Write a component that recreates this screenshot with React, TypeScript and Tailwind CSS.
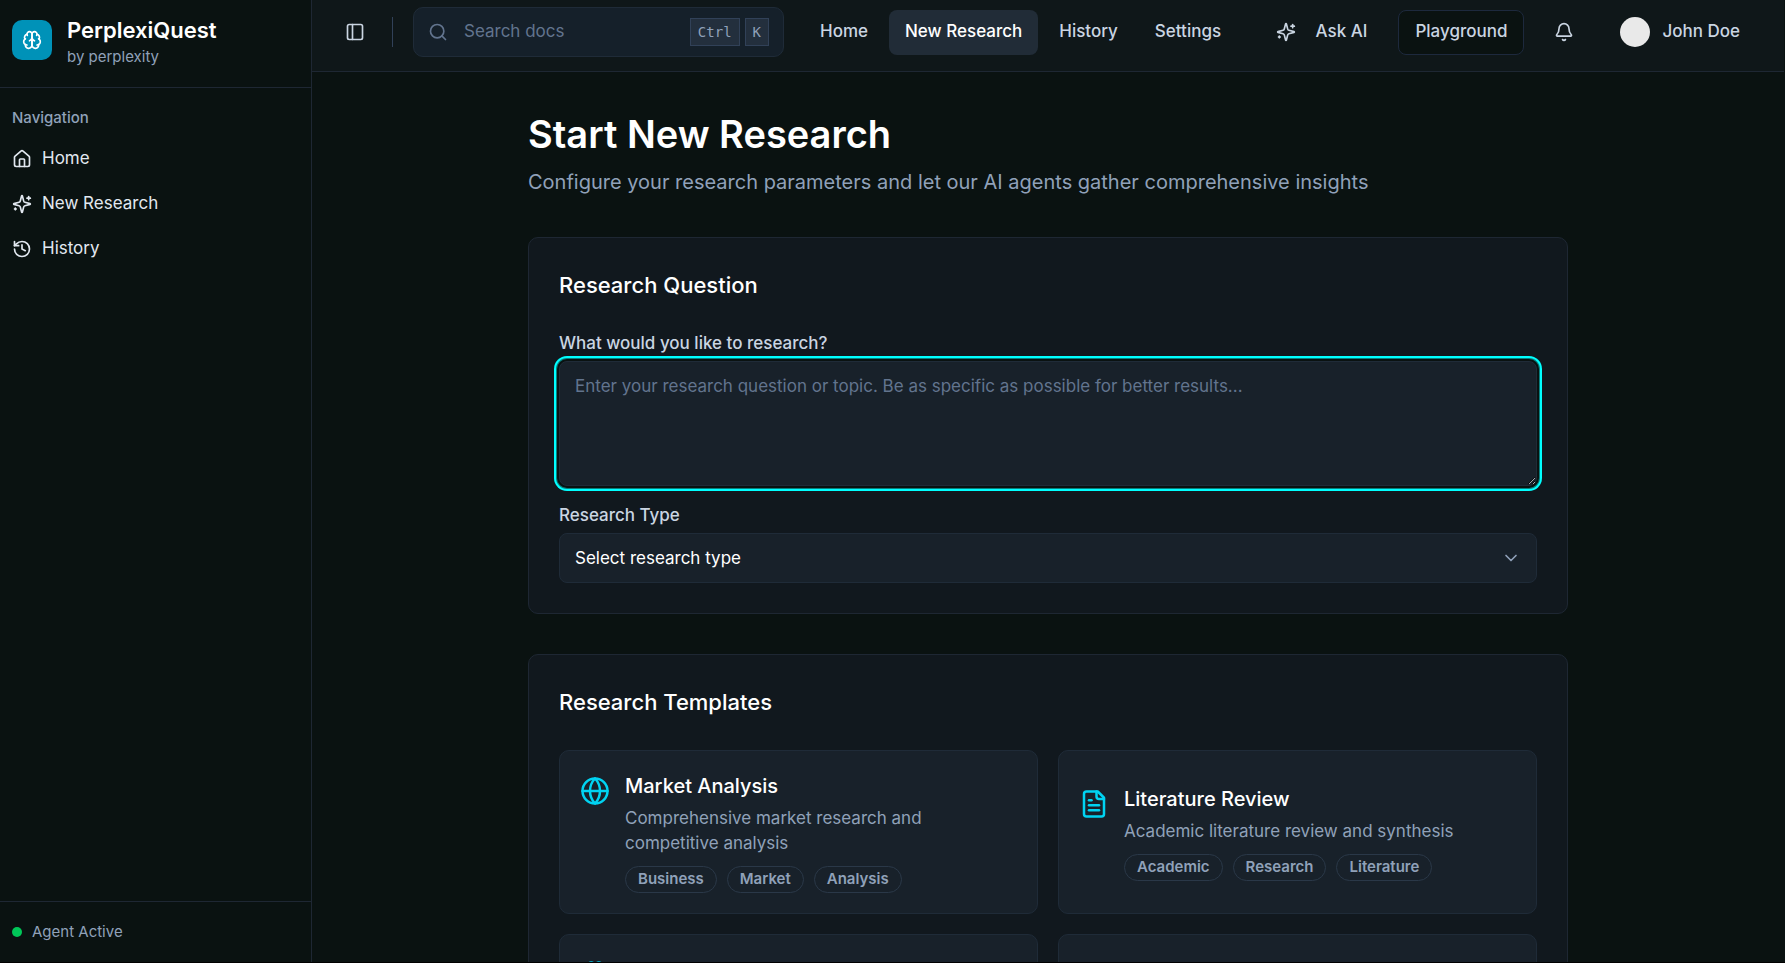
import type { ReactNode } from 'react';
import { Bell, ChevronDown, Globe, History, House, PanelLeft, Search, TrendingUp } from 'lucide-react';

type IconProps = { size?: number; className?: string };

function StrokeIcon({ size = 24, className, children }: IconProps & { children: ReactNode }) {
  return (
    <svg
      width={size}
      height={size}
      viewBox="0 0 24 24"
      fill="none"
      stroke="currentColor"
      strokeWidth={2}
      strokeLinecap="round"
      strokeLinejoin="round"
      aria-hidden="true"
      className={className}
    >
      {children}
    </svg>
  );
}

function Sparkles(props: IconProps) {
  return (
    <StrokeIcon {...props}>
      <path d="M9.937 15.5A2 2 0 0 0 8.5 14.063l-6.135-1.582a.5.5 0 0 1 0-.962L8.5 9.936A2 2 0 0 0 9.937 8.5l1.582-6.135a.5.5 0 0 1 .963 0L14.063 8.5A2 2 0 0 0 15.5 9.937l6.135 1.581a.5.5 0 0 1 0 .964L15.5 14.063a2 2 0 0 0-1.437 1.437l-1.582 6.135a.5.5 0 0 1-.963 0z" />
      <path d="M20 3v4" />
      <path d="M22 5h-4" />
      <path d="M4 17v2" />
      <path d="M5 18H3" />
    </StrokeIcon>
  );
}

function Brain(props: IconProps) {
  return (
    <StrokeIcon {...props}>
      <path d="M12 5a3 3 0 1 0-5.997.125 4 4 0 0 0-2.526 5.77 4 4 0 0 0 .556 6.588A4 4 0 1 0 12 18Z" />
      <path d="M12 5a3 3 0 1 1 5.997.125 4 4 0 0 1 2.526 5.77 4 4 0 0 1-.556 6.588A4 4 0 1 1 12 18Z" />
      <path d="M15 13a4.5 4.5 0 0 1-3-4 4.5 4.5 0 0 1-3 4" />
      <path d="M17.599 6.5a3 3 0 0 0 .399-1.375" />
      <path d="M6.003 5.125A3 3 0 0 0 6.401 6.5" />
      <path d="M3.477 10.896a4 4 0 0 1 .585-.396" />
      <path d="M19.938 10.5a4 4 0 0 1 .585.396" />
      <path d="M6 18a4 4 0 0 1-1.967-.516" />
      <path d="M19.967 17.484A4 4 0 0 1 18 18" />
    </StrokeIcon>
  );
}

function FileText(props: IconProps) {
  return (
    <StrokeIcon {...props}>
      <path d="M15 2H6a2 2 0 0 0-2 2v16a2 2 0 0 0 2 2h12a2 2 0 0 0 2-2V7Z" />
      <path d="M14 2v4a2 2 0 0 0 2 2h4" />
      <path d="M10 9H8" />
      <path d="M16 13H8" />
      <path d="M16 17H8" />
    </StrokeIcon>
  );
}

const sidebarLinks = [
  { label: 'Home', icon: House },
  { label: 'New Research', icon: Sparkles },
  { label: 'History', icon: History },
];

const topLinks = ['Home', 'New Research', 'History', 'Settings'];

const templates = [
  {
    title: 'Market Analysis',
    text: 'Comprehensive market research and competitive analysis',
    tags: ['Business', 'Market', 'Analysis'],
    icon: Globe,
  },
  {
    title: 'Literature Review',
    text: 'Academic literature review and synthesis',
    tags: ['Academic', 'Research', 'Literature'],
    icon: FileText,
  },
  {
    title: 'Technical Deep Dive',
    text: 'In-depth technical analysis and implementation details',
    tags: ['Technical', 'Engineering', 'Analysis'],
    icon: Brain,
  },
  {
    title: 'Trend Analysis',
    text: 'Current trends and future predictions',
    tags: ['Trends', 'Forecast', 'Insights'],
    icon: TrendingUp,
  },
];

function Sidebar() {
  return (
    <aside className="flex w-78 shrink-0 flex-col border-r border-[#1e2733]">
      <div className="flex h-22 items-start gap-[15px] border-b border-[#1e2733] px-3 pt-[15px]">
        <div className="mt-[5px] flex size-10 items-center justify-center rounded-[10px] bg-[#0092b8] text-white">
          <Brain size={20} />
        </div>
        <div>
          <p className="text-[22px] leading-[30px] font-semibold text-white">PerplexiQuest</p>
          <p className="text-[15px] leading-6 text-[#90a1b9]">by perplexity</p>
        </div>
      </div>
      <nav aria-label="Navigation" className="flex-1 px-3 pt-[10px]">
        <p className="mb-px flex h-10 items-center text-[15px] font-medium text-[#90a1b9]">Navigation</p>
        <ul className="flex flex-col gap-[5px]">
          {sidebarLinks.map(({ label, icon: Icon }) => (
            <li key={label}>
              <a href="#" className="flex h-10 items-center gap-[10px] text-[17px] text-[#e2e8f0]">
                <Icon size={20} />
                {label}
              </a>
            </li>
          ))}
        </ul>
      </nav>
      <div className="flex h-[61px] items-center gap-[10px] border-t border-[#1e2733] px-3 text-[15px] text-[#90a1b9]">
        <span className="size-[10px] rounded-full bg-[#00c758]" />
        Agent Active
      </div>
    </aside>
  );
}

function Key({ children }: { children: ReactNode }) {
  return (
    <kbd className="flex h-7 items-center border border-[#314158] bg-[#232f3d] px-[7px] font-['DejaVu_Sans_Mono',monospace] text-[14px] text-[#90a1b9]">
      {children}
    </kbd>
  );
}

function Header() {
  return (
    <header className="flex h-18 items-center justify-between border-b border-[#1e2733] bg-[#0f1719] pr-7 pb-[7px] pl-[20px] text-[17px] font-medium text-[#cad5e2]">
      <div className="flex items-center">
        <button type="button" aria-label="Toggle sidebar" className="flex size-[45px] items-center justify-center">
          <PanelLeft size={20} />
        </button>
        <span className="mr-5 ml-[15px] h-[30px] w-px bg-[#314158]" />
        <div className="flex h-[50px] w-[371px] items-center rounded-[10px] border border-[#1f2b38] bg-[#15202a] px-[14px]">
          <Search size={20} className="shrink-0 text-[#62748e]" />
          <input
            aria-label="Search docs"
            placeholder="Search docs"
            className="min-w-0 flex-1 bg-transparent px-4 font-normal outline-none placeholder:text-[#62748e]"
          />
          <span className="flex gap-[5px]">
            <Key>Ctrl</Key>
            <Key>K</Key>
          </span>
        </div>
        <nav aria-label="Main" className="ml-5 flex gap-[5px]">
          {topLinks.map((label) => (
            <a
              key={label}
              href="#"
              className={
                label === 'New Research'
                  ? 'flex h-[45px] items-center rounded-lg bg-[#212c37] px-4 text-white'
                  : 'flex h-[45px] items-center rounded-lg px-4'
              }
            >
              {label}
            </a>
          ))}
        </nav>
      </div>
      <div className="flex items-center gap-[15px]">
        <button type="button" className="flex h-[45px] items-center gap-5 px-4">
          <Sparkles size={20} />
          Ask AI
        </button>
        <button
          type="button"
          className="flex h-[45px] items-center rounded-lg border border-[#1d293d] bg-[#0a1211] px-4"
        >
          Playground
        </button>
        <button type="button" aria-label="Notifications" className="flex h-[45px] w-[50px] items-center justify-center">
          <Bell size={20} />
        </button>
        <button type="button" className="flex h-[45px] items-center gap-3 px-4">
          <span className="size-[30px] rounded-full bg-[#e9e9e9]" />
          John Doe
        </button>
      </div>
    </header>
  );
}

function Panel({ title, children }: { title: string; children: ReactNode }) {
  return (
    <section className="rounded-[10px] border border-[#1e2733] bg-[#11181e] p-[30px]">
      <h2 className="mb-[31px] text-[22px] leading-[34px] font-medium text-white">{title}</h2>
      {children}
    </section>
  );
}

export default function App() {
  return (
    <div className="flex h-screen overflow-hidden border-b border-black bg-[#0a1211] pr-px font-[Inter,sans-serif]">
      <Sidebar />
      <div className="flex min-w-0 flex-1 flex-col">
        <Header />
        <main className="min-h-0 flex-1 overflow-y-auto [scrollbar-width:none]">
          <div className="mx-auto flex max-w-[1120px] flex-col gap-10 p-10">
            <div>
              <h1 className="text-[38px] leading-[45px] font-semibold text-white">Start New Research</h1>
              <p className="mt-[10px] text-[20px] leading-[30px] text-[#90a1b9]">
                Configure your research parameters and let our AI agents gather comprehensive insights
              </p>
            </div>

            <Panel title="Research Question">
              <div className="flex flex-col text-[17px]">
                <label htmlFor="question" className="leading-5 font-medium text-[#cad5e2]">
                  What would you like to research?
                </label>
                <textarea
                  id="question"
                  placeholder="Enter your research question or topic. Be as specific as possible for better results..."
                  className="mt-2 h-[125px] w-full resize rounded-lg border border-[#1f2b38] bg-[#18212a] px-[15px] py-[12px] leading-[25px] text-white shadow-[0_0_0_2px_#0a1211,0_0_0_3px_#078080,0_0_0_5px_#00ffff] outline-none placeholder:text-[#62748e]"
                />
                <label htmlFor="type" className="mt-[19px] leading-5 font-medium text-[#cad5e2]">
                  Research Type
                </label>
                <div className="relative mt-2">
                  <select
                    id="type"
                    className="h-[50px] w-full appearance-none rounded-lg border border-[#1f2b38] bg-[#18212a] px-[15px] pt-[2px] text-white"
                  >
                    <option>Select research type</option>
                  </select>
                  <ChevronDown
                    size={20}
                    className="pointer-events-none absolute inset-y-0 right-4 my-auto text-[#90a1b9]"
                  />
                </div>
              </div>
            </Panel>

            <Panel title="Research Templates">
              <div className="grid grid-cols-2 gap-5">
                {templates.map(({ title, text, tags, icon: Icon }) => (
                  <button
                    key={title}
                    type="button"
                    className="flex items-center rounded-[10px] border border-[#1f2b38] bg-[#18212a] p-5 text-left"
                  >
                    <span className="flex items-start gap-[15px]">
                      <Icon size={30} className="mt-[5px] shrink-0 text-[#00d3f2]" />
                      <span className="block">
                        <span className="block text-[20px] leading-[30px] font-medium text-white">{title}</span>
                        <span className="mt-[5px] block max-w-[360px] text-[17px] leading-[25px] text-[#90a1b9]">
                          {text}
                        </span>
                        <span className="mt-[10px] flex gap-[10px]">
                          {tags.map((tag) => (
                            <span
                              key={tag}
                              className="flex h-[27px] items-center rounded-full border border-[#2a3848] px-3 text-[15px] font-semibold text-[#90a1b9]"
                            >
                              {tag}
                            </span>
                          ))}
                        </span>
                      </span>
                    </span>
                  </button>
                ))}
              </div>
            </Panel>
          </div>
        </main>
      </div>
    </div>
  );
}
